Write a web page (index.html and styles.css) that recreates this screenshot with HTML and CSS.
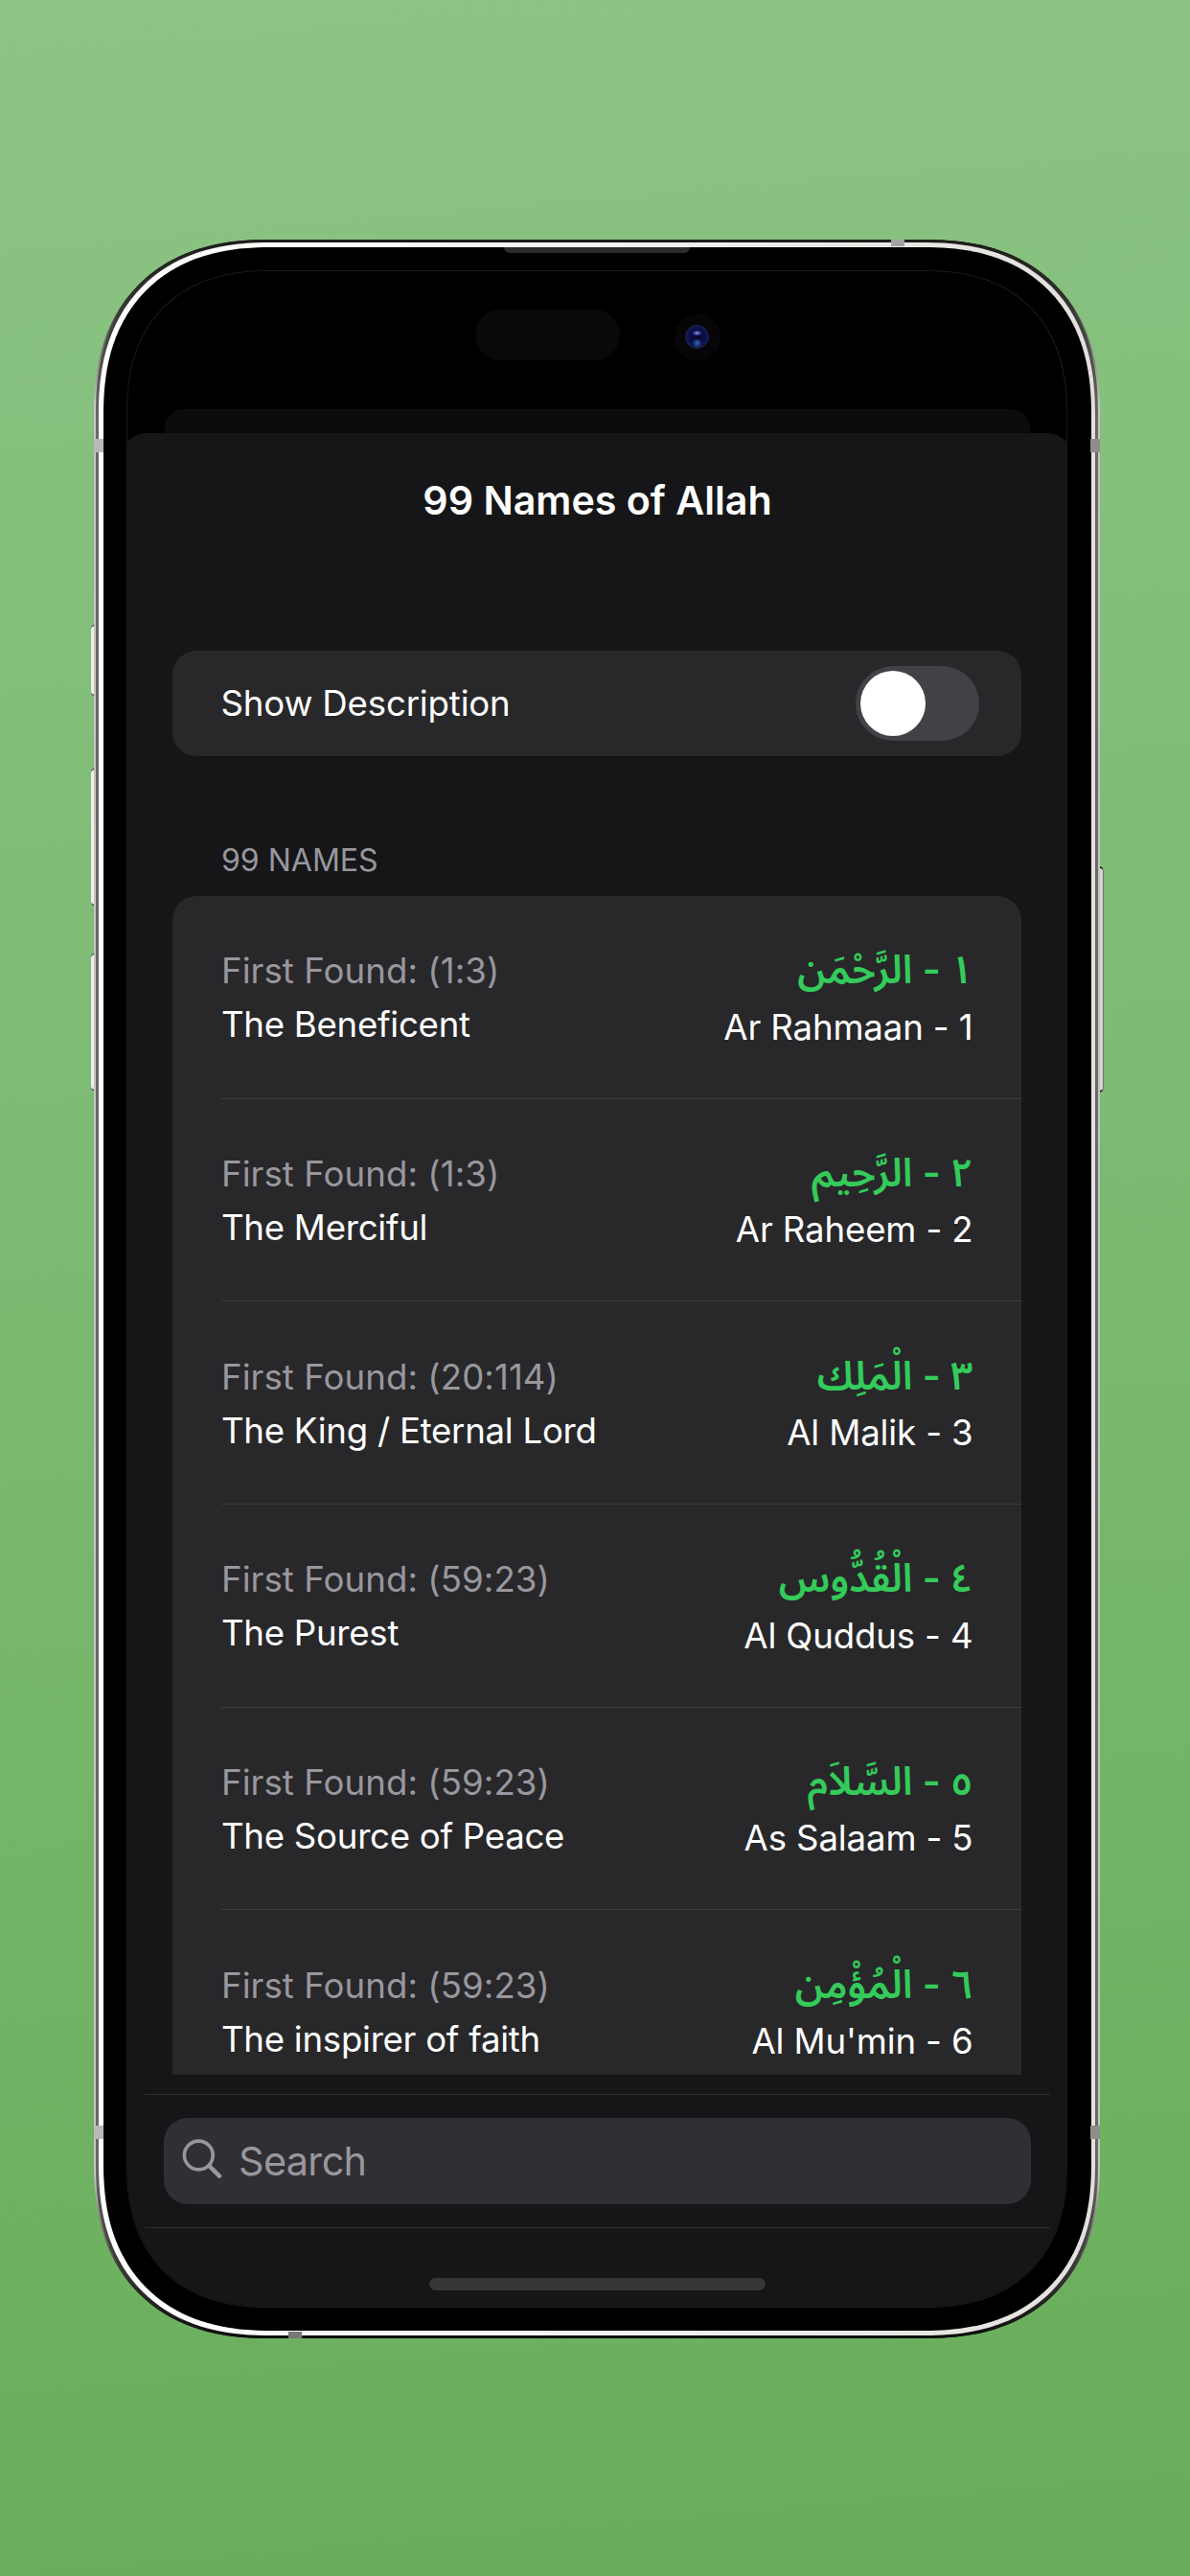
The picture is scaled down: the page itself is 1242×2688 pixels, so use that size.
FILE: index.html
```html
<!DOCTYPE html>
<html lang="en">
<head>
<meta charset="utf-8">
<title>99 Names of Allah</title>
<link rel="stylesheet" href="styles.css">
</head>
<body>
<div class="phone">
  <span class="key key-action"></span>
  <span class="key key-up"></span>
  <span class="key key-down"></span>
  <span class="key key-power"></span>
  <div class="edge">
    <div class="rim">
      <div class="bezel">
        <div class="screen">
          <div class="status">
            <span class="island"></span>
            <span class="camera"><span class="lens"></span></span>
          </div>
          <div class="back-sheet"></div>
          <main class="sheet">
            <h1 class="title">99 Names of Allah</h1>
            <section class="card toggle-row">
              <span class="label">Show Description</span>
              <span class="switch"><span class="knob"></span></span>
            </section>
            <h2 class="section">99 NAMES</h2>
            <section class="card list">
              <article class="row">
                <div class="left"><p class="found">First Found: (1:3)</p><p class="meaning">The Beneficent</p></div>
                <div class="right"><p class="arabic" lang="ar" dir="rtl">١ - الرَّحْمَن</p><p class="latin">Ar Rahmaan - 1</p></div>
              </article>
              <article class="row">
                <div class="left"><p class="found">First Found: (1:3)</p><p class="meaning">The Merciful</p></div>
                <div class="right"><p class="arabic" lang="ar" dir="rtl">٢ - الرَّحِيم</p><p class="latin">Ar Raheem - 2</p></div>
              </article>
              <article class="row">
                <div class="left"><p class="found">First Found: (20:114)</p><p class="meaning">The King / Eternal Lord</p></div>
                <div class="right"><p class="arabic" lang="ar" dir="rtl">٣ - الْمَلِك</p><p class="latin">Al Malik - 3</p></div>
              </article>
              <article class="row">
                <div class="left"><p class="found">First Found: (59:23)</p><p class="meaning">The Purest</p></div>
                <div class="right"><p class="arabic" lang="ar" dir="rtl">٤ - الْقُدُّوس</p><p class="latin">Al Quddus - 4</p></div>
              </article>
              <article class="row">
                <div class="left"><p class="found">First Found: (59:23)</p><p class="meaning">The Source of Peace</p></div>
                <div class="right"><p class="arabic" lang="ar" dir="rtl">٥ - السَّلاَم</p><p class="latin">As Salaam - 5</p></div>
              </article>
              <article class="row">
                <div class="left"><p class="found">First Found: (59:23)</p><p class="meaning">The inspirer of faith</p></div>
                <div class="right"><p class="arabic" lang="ar" dir="rtl">٦ - الْمُؤْمِن</p><p class="latin">Al Mu'min - 6</p></div>
              </article>
            </section>
            <div class="search-bar">
              <div class="search">
                <svg class="glass" viewBox="0 0 42 42" width="42" height="42" fill="none" stroke="#98979e" stroke-linecap="round">
                  <circle cx="17.3" cy="17" r="14.9" stroke-width="3.6"/>
                  <path d="M28.4 28.2 39 38.6" stroke-width="4.6"/>
                </svg>
                <span class="placeholder">Search</span>
              </div>
            </div>
            <div class="home"></div>
          </main>
        </div>
      </div>
    </div>
  </div>
  <span class="speaker"></span>
  <span class="band band-tl"></span>
  <span class="band band-tr"></span>
  <span class="band band-bl"></span>
  <span class="band band-br"></span>
  <span class="band band-top"></span>
  <span class="band band-bottom"></span>
</div>
</body>
</html>
```
FILE: styles.css
```css
* { box-sizing: border-box; margin: 0; padding: 0; }

body {
  width: 1242px;
  height: 2688px;
  padding: 249.5px 94px 0 98px;
  overflow: hidden;
  background: linear-gradient(175deg, #8cc484 0%, #7bb971 50%, #68ad59 100%);
  font-family: Inter, "Liberation Sans", sans-serif;
  font-size: 36.6px;
  color: #fff;
}

/* Device frame */
.phone {
  position: relative;
  height: 2190.5px;
  padding: 0 2px;
  border-radius: 160px;
  background: linear-gradient(#1c1c1a 0, #2a2a28 60px, #c4c6c0 170px, #c4c6c0 2020px, #2a2a28 2130px, #0c0c0c 100%);
}
.edge {
  height: 100%;
  padding: 3.5px 3px;
  border-radius: 159px;
  background: linear-gradient(#1c1c1a 0, #33322f 60px, #6b6965 190px, #6b6965 2000px, #33322f 2130px, #0c0c0c 100%);
}
.rim {
  height: 100%;
  padding: 4.5px;
  border-radius: 156px;
  background: linear-gradient(90deg, #fff, #f4f3f1 50%, #e2dfdc);
}
.bezel {
  height: 100%;
  padding: 24px 24.5px;
  border-radius: 152px;
  background: #000;
}
.screen {
  display: flex;
  flex-direction: column;
  height: 100%;
  border: 1px solid #1b1b1b;
  border-radius: 128px;
  overflow: hidden;
  background: #000;
}

/* Continuous corners, as on the real hardware */
@supports (corner-shape: squircle) {
  .phone, .edge, .rim, .bezel, .screen { corner-shape: superellipse(1.22); }
  .phone { border-radius: 182px; }
  .edge { border-radius: 181px; }
  .rim { border-radius: 178px; }
  .bezel { border-radius: 174px; }
  .screen { border-radius: 149px; }
}

/* Side keys and antenna bands */
.key {
  position: absolute;
  z-index: -1;
  left: -3.5px;
  width: 8px;
  border: solid #555;
  border-width: 2px 0;
  border-radius: 5px 0 0 5px;
  background: #eeedea;
}
.key-action { top: 401px; height: 76px; }
.key-up { top: 551px; height: 145px; }
.key-down { top: 744px; height: 145px; }
.key-power {
  top: 654px;
  left: auto;
  right: -3.5px;
  height: 236px;
  border-color: #222;
  border-right: 1px solid #77736f;
  border-radius: 0 5px 5px 0;
  background: #d8d5d1;
}
.band { position: absolute; width: 10px; height: 14px; background: #bab9b6; }
.band-tl { left: 0; top: 208px; }
.band-tr { right: 0; top: 208px; background: #8f8d8a; }
.band-bl { left: 0; top: 1968px; }
.band-br { right: 0; top: 1968px; background: #8f8d8a; }
.band-top { left: 832px; top: 0; width: 14px; height: 7px; background: #a5a3a1; }
.band-bottom { left: 203px; bottom: 0; width: 14px; height: 7px; background: #7a7876; }
.speaker {
  position: absolute;
  left: 428px;
  top: 8px;
  width: 194px;
  height: 6.5px;
  border-radius: 0 0 7px 7px;
  background: #2b2b2c;
}

/* Sensor area */
.status {
  display: flex;
  flex: none;
  height: 144px;
  padding: 40px 0 0 362.5px;
  gap: 57px;
}
.island { width: 151px; height: 53px; border-radius: 27px; background: #090909; }
.camera {
  display: flex;
  align-items: center;
  justify-content: center;
  width: 48px;
  height: 48px;
  margin-top: 5px;
  border-radius: 50%;
  background: #070508;
}
.lens {
  width: 25px;
  height: 25px;
  border-radius: 50%;
  background:
    radial-gradient(ellipse 5px 3px at 50% 34%, #8d8fe0, transparent),
    radial-gradient(circle 5px at 50% 76%, #2f6fb4, transparent),
    radial-gradient(ellipse 8px 3px at 50% 54%, #05051e, transparent),
    radial-gradient(circle, #0a0d4c 45%, #18204c 70%, #0b0d24 100%);
}
.back-sheet {
  flex: none;
  height: 45px;
  margin: 0 38px 0 38.5px;
  border-radius: 20px 20px 0 0;
  background: #0c0c0d;
}

/* Sheet */
.sheet {
  display: flex;
  flex-direction: column;
  flex: 1;
  margin: -20px -7px 0;
  padding: 45px 54px 0;
  border-radius: 27px 27px 0 0;
  background: #161618;
}
.title {
  height: 50px;
  padding-left: 1px;
  font-size: 41.2px;
  line-height: 50px;
  font-weight: 600;
  text-align: center;
}
.card { border-radius: 25px; background: #28282a; }
.toggle-row {
  display: flex;
  align-items: center;
  justify-content: space-between;
  flex: none;
  height: 109.5px;
  margin-top: 132.5px;
  padding: 0 44.5px 0 50.5px;
}
.label { letter-spacing: -0.15px; }
.switch { width: 128.5px; height: 78px; padding: 5px; border-radius: 39px; background: #424146; }
.knob { display: block; width: 68px; height: 68px; border-radius: 50%; background: #fff; }
.section {
  margin: 89.5px 0 17px 51px;
  font-size: 32px;
  line-height: 40px;
  font-weight: 400;
  color: #98979e;
}
.list {
  flex: none;
  height: 1229.8px;
  border-radius: 25px 25px 0 0;
  overflow: hidden;
}
.row {
  display: flex;
  justify-content: space-between;
  height: 211.7px;
  padding: 50.3px 50.5px 0 0;
  margin-left: 51px;
  border-bottom: 1px solid #3c3c3f;
  line-height: 56px;
}
.found { color: #98979e; letter-spacing: 0.08px; }
.meaning { letter-spacing: -0.25px; }
.right { text-align: right; }
.latin { letter-spacing: -0.12px; }
.arabic {
  height: 58.3px;
  font-family: Inter, "Noto Sans Arabic", "DejaVu Sans", sans-serif;
  font-size: 41px;
  line-height: 52px;
  font-weight: 600;
  color: #34cb5b;
}

/* Search */
.search-bar {
  flex: none;
  height: 140px;
  margin: 20.2px -29.5px 0;
  padding: 24px 20px 0;
  border: solid #303032;
  border-width: 1px 0;
}
.search {
  display: flex;
  align-items: center;
  gap: 17.5px;
  height: 90px;
  padding-left: 19px;
  border-radius: 25px;
  background: #302f33;
}
.glass { flex: none; margin-bottom: 4px; }
.placeholder { padding-top: 1px; font-size: 41.3px; letter-spacing: -0.6px; color: #98979e; }
.home {
  flex: none;
  align-self: center;
  width: 351px;
  height: 13px;
  margin-top: 52px;
  border-radius: 7px;
  background: #363636;
}
```
